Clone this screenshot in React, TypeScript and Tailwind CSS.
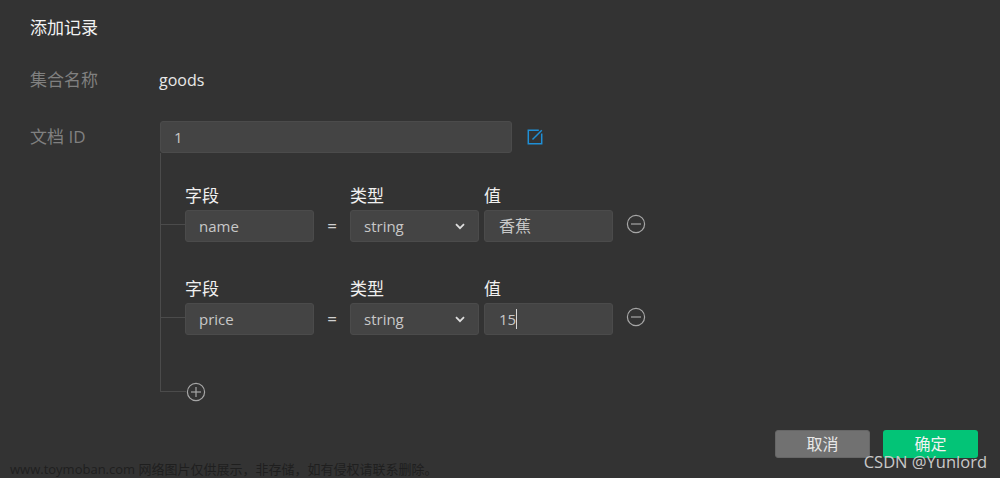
const FONT = "font-['Open_Sans','Noto_Sans_CJK_SC',sans-serif]";

function Box({ className = "", children }: { className?: string; children?: React.ReactNode }) {
  return (
    <div className={`flex items-center h-[32px] rounded-[3px] border border-[#4b4b4b] bg-[#444444] text-[15px] text-[#c8c8c8] ${className}`}>
      {children}
    </div>
  );
}

function CircleIcon({ plus }: { plus?: boolean }) {
  return (
    <svg width="20" height="20" viewBox="0 0 20 20" fill="none" stroke="#a6a6a6" strokeWidth="1.2" className="shrink-0">
      <circle cx="10" cy="10" r="8.6" />
      <path d="M5 10h10" />
      {plus && <path d="M10 5v10" />}
    </svg>
  );
}

function FieldRow({ name, value, cursor }: { name: string; value: string; cursor?: boolean }) {
  return (
    <div>
      <div className="flex pl-[24px] h-[20px] items-center text-[17px] leading-[20px] text-[#f0f0f0]">
        <span className="w-[165px]">字段</span>
        <span className="w-[134px]">类型</span>
        <span>值</span>
      </div>
      <div className="flex items-center mt-[4px]">
        <div className="w-[24px] h-px mb-[4px] bg-[#4b4b4b]" />
        <Box className="w-[129px] pl-[13px]">{name}</Box>
        <span className="w-[36px] text-center text-[17px] text-[#d0d0d0]">=</span>
        <Box className="w-[129px] pl-[13px] pr-[13px] justify-between">
          string
          <svg width="10" height="7" viewBox="0 0 10 7" fill="none" stroke="#dddddd" strokeWidth="1.8">
            <path d="M1 1.2 5 5.2l4-4" />
          </svg>
        </Box>
        <Box className="w-[129px] ml-[5px] pl-[14px]">
          <span className={value === "香蕉" ? "text-[16px]" : ""}>{value}</span>
          {cursor && <span className="w-px h-[20px] bg-[#d8d8d8]" />}
        </Box>
        <div className="ml-[13px] mb-[4px]">
          <CircleIcon />
        </div>
      </div>
    </div>
  );
}

export default function App() {
  return (
    <div className={`relative w-[1000px] h-[478px] overflow-hidden bg-[#333333] pl-[30px] pr-[22px] pt-[17px] ${FONT}`}>
      <h1 className="h-[22px] text-[17px] leading-[22px] font-normal text-[#f2f2f2]">添加记录</h1>

      <div className="flex items-center h-[22px] mt-[30px]">
        <span className="w-[129px] text-[17px] text-[#808080]">集合名称</span>
        <span className="text-[16px] text-[#e8e8e8]">goods</span>
      </div>

      <div className="flex items-center mt-[30px]">
        <span className="w-[130px] text-[17px] text-[#808080]">文档 ID</span>
        <Box className="w-[352px] pl-[13px]">1</Box>
        <svg width="16" height="16" viewBox="0 0 16 16" fill="none" stroke="#1f8fd6" strokeWidth="1.5" className="ml-[15px]">
          <path d="M14.7 4.5v10.2H1.3V1.3h10.5" />
          <path d="M5.5 10.5 14.8 1.2" />
        </svg>
      </div>

      <div className="ml-[130px] w-[600px] border-l border-[#4b4b4b] pt-[33px]">
        <FieldRow name="name" value="香蕉" />
        <div className="mt-[37px]">
          <FieldRow name="price" value="15" cursor />
        </div>
        <div className="flex items-center h-px mt-[56px]">
          <div className="w-[25px] h-px bg-[#4b4b4b]" />
          <CircleIcon plus />
        </div>
      </div>

      <div className="flex justify-end gap-[13px] mt-[38px]">
        <button className="w-[95px] h-[28px] rounded-[3px] border border-[#666666] bg-[#717171] text-[16px] text-[#e8e8e8]">取消</button>
        <button className="w-[95px] h-[28px] rounded-[3px] bg-[#03c477] text-[16px] text-[#f2f2f2]">确定</button>
      </div>

      <span className="absolute left-[10px] top-[460px] text-[13px] leading-[19px] whitespace-nowrap text-[#1f1f1f]">www.toymoban.com 网络图片仅供展示，非存储，如有侵权请联系删除。</span>
      <span className="absolute right-[13px] top-[451px] text-[16.5px] leading-[22px] whitespace-nowrap text-[#c9c9c9]">CSDN @Yunlord</span>
    </div>
  );
}
